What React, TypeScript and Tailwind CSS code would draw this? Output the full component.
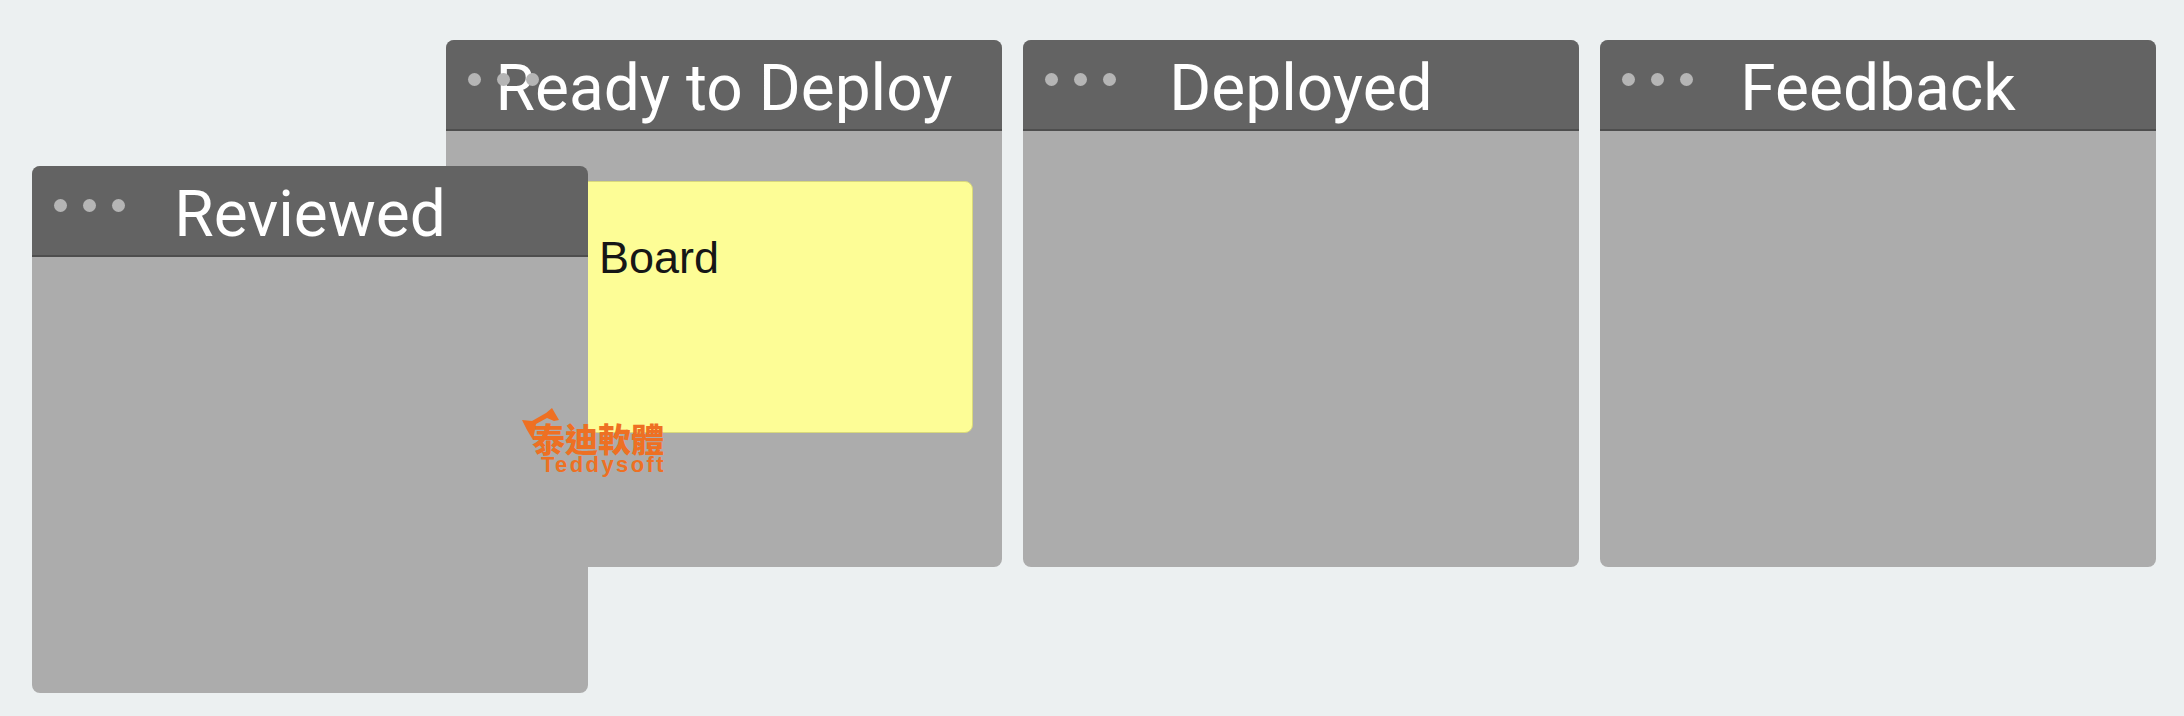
import React from "react";

function Dots() {
  return (
    <div className="absolute left-[22px] top-[33px] flex gap-[16px]">
      <span className="h-[13px] w-[13px] rounded-full bg-[#b5b5b5]" />
      <span className="h-[13px] w-[13px] rounded-full bg-[#b5b5b5]" />
      <span className="h-[13px] w-[13px] rounded-full bg-[#b5b5b5]" />
    </div>
  );
}

function Column({ title, children, className = "" }: { title: string; children?: React.ReactNode; className?: string }) {
  return (
    <section className={`flex h-[527px] w-[556px] flex-col overflow-hidden rounded-lg bg-[#acacac] ${className}`}>
      <header className="relative flex h-[91px] shrink-0 items-center justify-center border-b-2 border-[#4e4e4e] bg-[#636363]">
        {/* title goes over the dots on the long heading, same as the screenshot */}
        <h2 className="relative pt-[9px] font-['Roboto',sans-serif] text-[64px] leading-none font-normal text-white">{title}</h2>
        <Dots />
      </header>
      {children}
    </section>
  );
}

function Logo() {
  return (
    <div className="absolute left-[522px] top-[408px] flex h-[68px] w-[144px] flex-col items-end text-[#ee7023]">
      <svg className="absolute left-0 top-0" width="44" height="34" viewBox="0 0 44 34" fill="currentColor">
        <path d="M0 12 L10 13 L24 5 L30 0 L37 12 L32 13 L25 10 L14 16 L11 32 L5 22 Z" />
      </svg>
      <span className="mt-[14px] pr-[2px] font-['Noto_Sans_CJK_TC',sans-serif] text-[33px] leading-[32px] font-black">
        泰迪軟體
      </span>
      <span className="mt-[2px] font-['Liberation_Sans',sans-serif] text-[22px] leading-[18px] font-bold tracking-[2.4px]">
        Teddysoft
      </span>
    </div>
  );
}

export default function App() {
  return (
    <div className="relative h-[716px] w-[2184px] overflow-hidden bg-[#ecf0f1] font-['Liberation_Sans',sans-serif]">
      <div className="flex gap-[21px] pl-[446px] pt-[40px]">
        <Column title="Ready to Deploy">
          <div className="ml-[30px] mr-[29px] mt-[50px] h-[252px] rounded-lg border border-[#d9d97c] bg-[#fdfd96] pl-[122px] pt-[49px]">
            <p className="text-[45px] leading-[54px] text-[#161616]">Board</p>
          </div>
        </Column>
        <Column title="Deployed" />
        <Column title="Feedback" />
      </div>

      {/* column being dragged, sits on top of the board */}
      <Column title="Reviewed" className="absolute left-[32px] top-[166px]" />
      <Logo />
    </div>
  );
}
